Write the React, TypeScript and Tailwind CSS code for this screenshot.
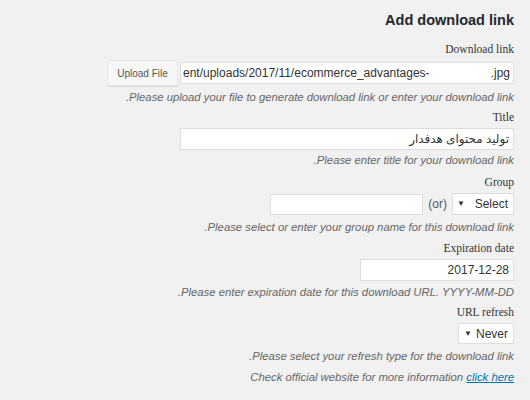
import React from 'react';

const serif = "font-['Liberation_Serif',serif]";
const sans = "font-['Liberation_Sans','Noto_Sans',sans-serif]";

function Label({ children }: { children: React.ReactNode }) {
  return <div className={`${serif} text-[11.5px] leading-[14px] text-[#333]`}>{children}</div>;
}

function Help({ children }: { children: React.ReactNode }) {
  return <div className={`${sans} text-[11.3px] italic leading-[14px] text-[#666]`}>{children}</div>;
}

function Caret() {
  return <span className="text-[8px] text-[#333]">▼</span>;
}

export default function App() {
  return (
    <div className={`min-h-[400px] w-[530px] bg-[#f1f1f1] ${sans}`}>
      <div className="flex flex-col items-end pr-[16px] pt-[12px]">
        <h2 className="text-[14.5px] font-bold leading-[16px] text-[#23282d]">Add download link</h2>

        <div className="mt-[14px]">
          <Label>Download link</Label>
        </div>
        <div className="mt-[4px] flex h-[26px] items-center gap-[2px]">
          <button className="h-[26px] w-[71px] rounded-[2px] border border-[#e6e6e6] bg-[#f7f7f7] text-[10px] text-[#555] shadow-[0_1px_0_#dcdcdc]">
            Upload File
          </button>
          <div className="flex h-[22px] w-[334px] items-center justify-between border border-[#ddd] bg-white pl-[2px] pr-[3px] text-[12px] text-[#333]">
            <span>ent/uploads/2017/11/ecommerce_advantages-</span>
            <span>.jpg</span>
          </div>
        </div>
        <div className="mt-[4px]">
          <Help>.Please upload your file to generate download link or enter your download link</Help>
        </div>

        <div className="mt-[6px]">
          <Label>Title</Label>
        </div>
        <div className="mt-[4px] flex h-[22px] w-[334px] items-center justify-end border border-[#ddd] bg-white px-[4px] text-[#333]">
          <span dir="rtl" className="font-['Noto_Sans','DejaVu_Sans',sans-serif] text-[12px]">تولید محتوای هدفدار</span>
        </div>
        <div className="mt-[3px]">
          <Help>.Please enter title for your download link</Help>
        </div>

        <div className="mt-[8px]">
          <Label>Group</Label>
        </div>
        <div className="mt-[4px] flex h-[22px] items-center">
          <div className="h-[21px] w-[153px] border border-[#ddd] bg-white" />
          <span className="ml-[5px] mr-[5px] text-[12px] text-[#555]">(or)</span>
          <div className="flex h-[22px] w-[62px] items-center border border-[#ddd] bg-white pl-[4px] pr-[5px] text-[12px] text-[#333]">
            <Caret />
            <span className="ml-auto">Select</span>
          </div>
        </div>
        <div className="mt-[5px]">
          <Help>.Please select or enter your group name for this download link</Help>
        </div>

        <div className="mt-[7px]">
          <Label>Expiration date</Label>
        </div>
        <div className="mt-[4px] flex h-[22px] w-[154px] items-center justify-end border border-[#ddd] bg-white px-[4px] text-[12px] text-[#333]">
          2017-12-28
        </div>
        <div className="mt-[4px]">
          <Help>.Please enter expiration date for this download URL. YYYY-MM-DD</Help>
        </div>

        <div className="mt-[6px]">
          <Label>URL refresh</Label>
        </div>
        <div className="mt-[4px] flex h-[21px] w-[56px] items-center border border-[#ddd] bg-white pl-[5px] pr-[5px] text-[12px] text-[#333]">
          <Caret />
          <span className="ml-auto">Never</span>
        </div>
        <div className="mt-[5px]">
          <Help>.Please select your refresh type for the download link</Help>
        </div>
        <div className="mt-[7px]">
          <Help>
            Check official website for more information{' '}
            <a href="#" className="text-[#0073aa] underline">click here</a>
          </Help>
        </div>
      </div>
    </div>
  );
}
